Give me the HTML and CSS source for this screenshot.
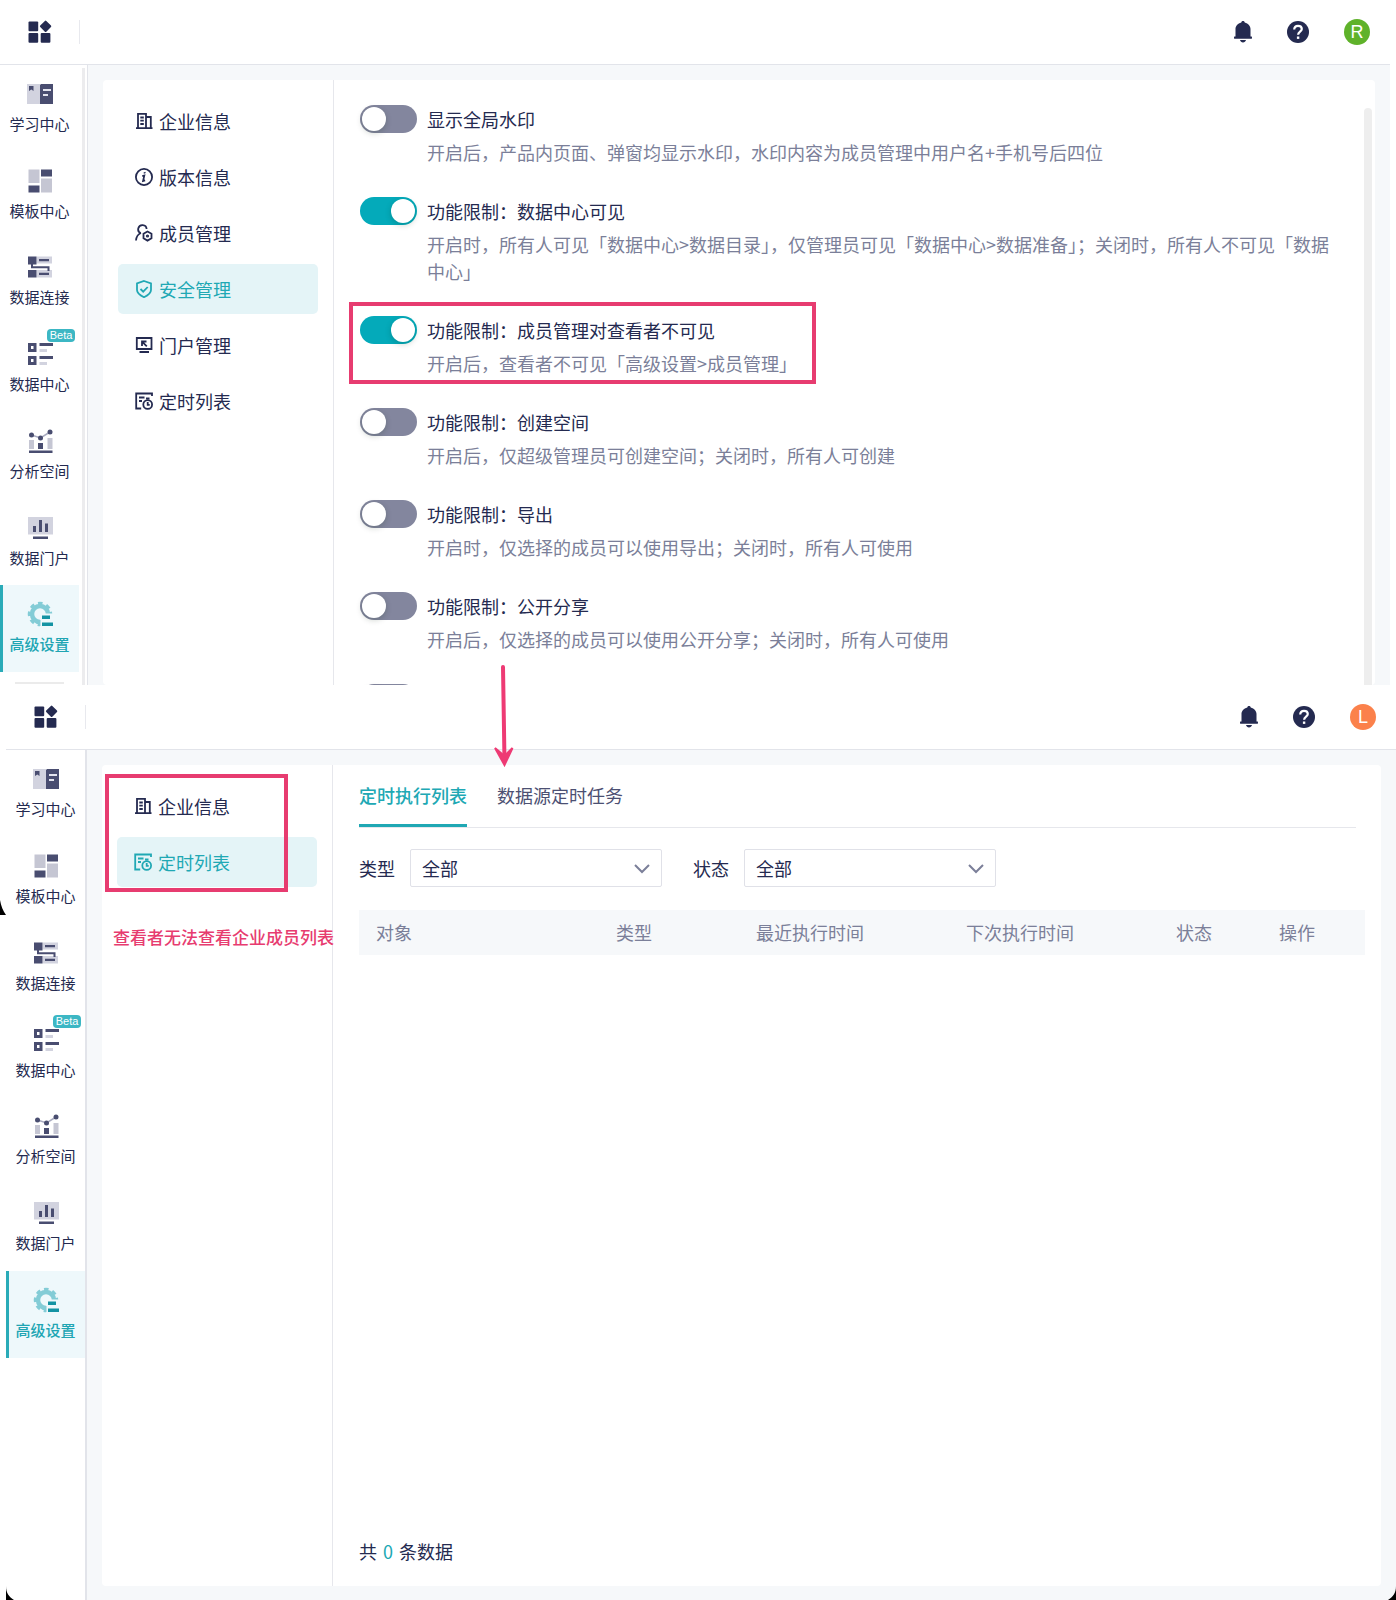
FILE: index.html
```html
<!DOCTYPE html>
<html lang="zh-CN">
<head>
    <meta charset="UTF-8">
    <meta name="viewport" content="width=device-width, initial-scale=1.0">
    <title>高级设置</title>
    <link rel="stylesheet" href="styles.css">
</head>
<body>

<svg class="symbols" aria-hidden="true">
    <symbol id="logo" viewBox="0 0 24 24">
        <rect x="0.500" y="1.500" width="9.700" height="9.700" rx="1"/>
        <rect x="0.500" y="13" width="9.700" height="9.700" rx="1"/>
        <rect x="12.700" y="13" width="9.700" height="9.700" rx="1"/>
        <rect x="13.300" y="2" width="8.600" height="8.600" rx="1" transform="rotate(45 17.600 6.300)"/>
    </symbol>
    <symbol id="bell" viewBox="0 0 18 22">
        <path d="M9 0c1 0 1.600.6 1.700 1.400C14.300 2.200 16.500 5 16.500 8v7.500h.9c.8 0 .8 2.300 0 2.300H.6c-.8 0-.8-2.300 0-2.300h.9V8c0-3 2.200-5.800 5.800-6.600C7.400.6 8 0 9 0zM6 19h6c-.4 1.600-1.500 2.500-3 2.500S6.400 20.600 6 19z"/>
    </symbol>
    <symbol id="help" viewBox="0 0 22 22">
        <circle cx="11" cy="11" r="11"/>
        <path d="M7.200 8.500C7.300 6.200 8.800 4.800 11 4.800s3.800 1.300 3.800 3.200c0 2.600-3.700 2.700-3.700 5.700" fill="none" stroke="#fff" stroke-width="2.200"/>
        <rect x="9.900" y="15.500" width="2.400" height="2.400" fill="#fff"/>
    </symbol>
    <symbol id="learn" viewBox="0 0 26 26">
        <path class="light" d="M0 3h13v20H0z"/>
        <path class="dark" d="M2 5h4.500v5L4.300 8.500 2 10zM13 4l1-1h12v20H13z"/>
        <path d="M16 8h8v2h-8zM16 13h5v2h-5z" fill="#e3e4ee"/>
    </symbol>
    <symbol id="template" viewBox="0 0 26 26">
        <path class="light mid" d="M1.500 1.500h11v13.500h-11zM14 10.500h11v14H14z"/>
        <path class="dark" d="M1.500 17.500h11v7h-11zM14 1.500h11v7H14z"/>
    </symbol>
    <symbol id="connect" viewBox="0 0 26 26">
        <path class="light" d="M9.500 2.500H25v7H9.500zM9.500 16H25v7.500H9.500z"/>
        <path class="dark" d="M1 2.500h8.500v8H1zM1 16h8.500v7.500H1zM12 5h10v2.300H12zM12 18.700h10V21H12z"/>
        <path d="M5 10v3.300h16.500V17" fill="none" stroke="#494d70" stroke-width="2"/>
    </symbol>
    <symbol id="data" viewBox="0 0 26 26">
        <path d="M2.500 3.500H8v6H2.500zM2.500 16.500H8v6H2.500z" fill="none" stroke="#494d70" stroke-width="3"/>
        <path class="dark" d="M12.500 2H26v3H12.500zM12.500 15H26v3H12.500z"/>
        <path class="light" d="M12.500 8H20v3h-7.500zM12.500 21H20v3h-7.500z"/>
    </symbol>
    <symbol id="analysis" viewBox="0 0 26 26">
        <path class="light mid" d="M2 12h5v9H2zM20.500 10h5v11h-5z"/>
        <path class="dark" d="M11 15h5v6h-5zM2 22.500h23.500V25H2z"/>
        <path d="M4.500 7l9 3 9.500-6" fill="none" stroke="#a9abc0" stroke-width="1.500"/>
        <circle class="dark" cx="4.500" cy="7" r="2.500"/>
        <circle class="dark" cx="13.500" cy="10" r="2.500"/>
        <circle class="dark" cx="23" cy="4" r="2.500"/>
    </symbol>
    <symbol id="portal" viewBox="0 0 26 26">
        <path class="light" d="M1 2h25v17.500H1z"/>
        <path class="dark" d="M6 11h3v6H6zM12 5h3v12h-3zM18 8.500h3V17h-3zM6 21.500h15V24H6z"/>
    </symbol>
    <symbol id="setting" viewBox="0 0 26 26">
        <circle cx="13" cy="13" r="8" fill="none" stroke="#83ccd6" stroke-width="4.500"/>
        <circle cx="13" cy="13" r="10.500" fill="none" stroke="#83ccd6" stroke-width="3.500" stroke-dasharray="4.300 3.947" transform="rotate(-12 13 13)"/>
        <path d="M13 12.500h13V26H13z" fill="#eef8fb"/>
        <path d="M11 19h2.500v6H11z" fill="#83ccd6"/>
        <path d="M15 14.500h8V18h-8zM15 21.500h11V25H15z" fill="#1493a3"/>
    </symbol>
    <symbol id="company" viewBox="0 0 18 18">
        <path d="M1 16.200h16.500M3 16V1.800h8V16M11 5h4.800v11M5.300 5.500h3.500M5.300 8.700h3.500M5.300 12h3.500"/>
    </symbol>
    <symbol id="version" viewBox="0 0 18 18">
        <circle cx="9" cy="9" r="8.100"/>
        <path d="M7.300 8.200l2-.6-1.200 5.300 2-.6"/>
        <path d="M9.300 4.200l.6 1.200" stroke-width="2"/>
    </symbol>
    <symbol id="member" viewBox="0 0 18 18">
        <path d="M5.800 9.200A4.200 4.200 0 1 1 11.600 5M1 16.500c.4-4 2-6.500 5-7.500"/>
        <path d="M12.500 7.500l4 2.200v4.600l-4 2.300-4-2.300V9.700z"/>
        <circle cx="12.500" cy="12" r="0.700"/>
    </symbol>
    <symbol id="safe" viewBox="0 0 18 18">
        <path d="M9 1l7 2.500V10c0 3.500-3.500 5.500-7 7.200C5.500 15.500 2 13.500 2 10V3.500zM5.500 9l2.700 2.700L12.700 7"/>
    </symbol>
    <symbol id="door" viewBox="0 0 18 18">
        <path d="M1.800 2h14.700v11H1.800zM4.500 16h9.500M7 10V5.500h4.500M7.300 5.800l4.500 4.500"/>
    </symbol>
    <symbol id="timing" viewBox="0 0 18 18">
        <path d="M17 4V1.500H1.200v15h5M4 5.500h5.500M4 9h3"/>
        <circle cx="12.700" cy="12.500" r="4.400"/>
        <path d="M11 6.500h3.500M12.700 10v2.800h2"/>
    </symbol>
</svg>

<div class="page">
    <!-- 管理员视角 -->
    <section class="window window-admin">
        <header class="header">
            <a class="logo" href="#" aria-label="首页"><svg><use href="#logo"/></svg></a>
            <div class="header-right">
                <button class="icon-btn bell" aria-label="通知"><svg><use href="#bell"/></svg></button>
                <button class="icon-btn" aria-label="帮助"><svg><use href="#help"/></svg></button>
                <button class="avatar">R</button>
            </div>
        </header>
        <div class="body">
            <div class="sidebar">
                <nav class="nav">
                    <a href="#"><svg><use href="#learn"/></svg>学习中心</a>
                    <a href="#"><svg><use href="#template"/></svg>模板中心</a>
                    <a href="#"><svg><use href="#connect"/></svg>数据连接</a>
                    <a href="#"><svg><use href="#data"/></svg>数据中心<span class="beta">Beta</span></a>
                    <a href="#"><svg><use href="#analysis"/></svg>分析空间</a>
                    <a href="#"><svg><use href="#portal"/></svg>数据门户</a>
                    <a class="active" href="#"><svg><use href="#setting"/></svg>高级设置</a>
                    <hr>
                </nav>
                <div class="nav-scroll"></div>
            </div>
            <main class="main">
                <div class="panel">
                    <nav class="menu">
                        <a href="#"><svg><use href="#company"/></svg>企业信息</a>
                        <a href="#"><svg><use href="#version"/></svg>版本信息</a>
                        <a href="#"><svg><use href="#member"/></svg>成员管理</a>
                        <a class="active" href="#"><svg><use href="#safe"/></svg>安全管理</a>
                        <a href="#"><svg><use href="#door"/></svg>门户管理</a>
                        <a href="#"><svg><use href="#timing"/></svg>定时列表</a>
                    </nav>
                    <div class="settings">
                        <div class="setting">
                            <input type="checkbox" class="switch" id="s1">
                            <div class="setting-text">
                                <label for="s1">显示全局水印</label>
                                <p>开启后，产品内页面、弹窗均显示水印，水印内容为成员管理中用户名+手机号后四位</p>
                            </div>
                        </div>
                        <div class="setting">
                            <input type="checkbox" class="switch" id="s2" checked>
                            <div class="setting-text">
                                <label for="s2">功能限制：数据中心可见</label>
                                <p>开启时，所有人可见「数据中心&gt;数据目录」，仅管理员可见「数据中心&gt;数据准备」；关闭时，所有人不可见「数据中心」</p>
                            </div>
                        </div>
                        <div class="setting">
                            <input type="checkbox" class="switch" id="s3" checked>
                            <div class="setting-text">
                                <label for="s3">功能限制：成员管理对查看者不可见</label>
                                <p>开启后，查看者不可见「高级设置&gt;成员管理」</p>
                            </div>
                            <div class="mark mark-setting"></div>
                        </div>
                        <div class="setting">
                            <input type="checkbox" class="switch" id="s4">
                            <div class="setting-text">
                                <label for="s4">功能限制：创建空间</label>
                                <p>开启后，仅超级管理员可创建空间；关闭时，所有人可创建</p>
                            </div>
                        </div>
                        <div class="setting">
                            <input type="checkbox" class="switch" id="s5">
                            <div class="setting-text">
                                <label for="s5">功能限制：导出</label>
                                <p>开启时，仅选择的成员可以使用导出；关闭时，所有人可使用</p>
                            </div>
                        </div>
                        <div class="setting">
                            <input type="checkbox" class="switch" id="s6">
                            <div class="setting-text">
                                <label for="s6">功能限制：公开分享</label>
                                <p>开启后，仅选择的成员可以使用公开分享；关闭时，所有人可使用</p>
                            </div>
                        </div>
                        <div class="setting">
                            <input type="checkbox" class="switch" id="s7" aria-label="功能限制">
                        </div>
                    </div>
                    <div class="panel-scroll"></div>
                </div>
            </main>
        </div>
    </section>

    <!-- 查看者视角 -->
    <section class="window window-viewer">
        <header class="header">
            <a class="logo" href="#" aria-label="首页"><svg><use href="#logo"/></svg></a>
            <div class="header-right">
                <button class="icon-btn bell" aria-label="通知"><svg><use href="#bell"/></svg></button>
                <button class="icon-btn" aria-label="帮助"><svg><use href="#help"/></svg></button>
                <button class="avatar orange">L</button>
            </div>
        </header>
        <div class="body">
            <div class="sidebar">
                <nav class="nav">
                    <a href="#"><svg><use href="#learn"/></svg>学习中心</a>
                    <a href="#"><svg><use href="#template"/></svg>模板中心</a>
                    <a href="#"><svg><use href="#connect"/></svg>数据连接</a>
                    <a href="#"><svg><use href="#data"/></svg>数据中心<span class="beta">Beta</span></a>
                    <a href="#"><svg><use href="#analysis"/></svg>分析空间</a>
                    <a href="#"><svg><use href="#portal"/></svg>数据门户</a>
                    <a class="active" href="#"><svg><use href="#setting"/></svg>高级设置</a>
                </nav>
            </div>
            <main class="main">
                <div class="panel">
                    <nav class="menu">
                        <a href="#"><svg><use href="#company"/></svg>企业信息</a>
                        <a class="active" href="#"><svg><use href="#timing"/></svg>定时列表</a>
                        <div class="mark mark-menu"></div>
                        <div class="mark-text">查看者无法查看企业成员列表</div>
                    </nav>
                    <div class="tasks">
                        <div class="tabs">
                            <button class="tab active">定时执行列表</button>
                            <button class="tab">数据源定时任务</button>
                        </div>
                        <div class="filters">
                            <label for="type">类型</label>
                            <div class="select">
                                <select id="type"><option>全部</option></select>
                                <svg viewBox="0 0 16 10"><path d="M1 1l7 7 7-7"/></svg>
                            </div>
                            <label for="status">状态</label>
                            <div class="select">
                                <select id="status"><option>全部</option></select>
                                <svg viewBox="0 0 16 10"><path d="M1 1l7 7 7-7"/></svg>
                            </div>
                        </div>
                        <table class="table">
                            <thead>
                                <tr>
                                    <th>对象</th>
                                    <th class="col-type">类型</th>
                                    <th class="col-time">最近执行时间</th>
                                    <th class="col-time">下次执行时间</th>
                                    <th class="col-small">状态</th>
                                    <th class="col-small">操作</th>
                                </tr>
                            </thead>
                        </table>
                        <div class="total">共 <span>0</span> 条数据</div>
                    </div>
                </div>
            </main>
        </div>
    </section>

    <svg class="arrow" viewBox="0 0 20 102"><path d="M9 2l1.500 94" stroke-width="4" stroke-linecap="round"/><path d="M1 83l9.500 17L18.500 83l-8 8z" fill="#ee3a74" stroke-width="2"/></svg>
    <svg class="corner corner-top" viewBox="0 0 6 15"><path d="M0 0c1 6 3 11 6 15H0z"/></svg>
    <svg class="corner corner-left" viewBox="0 0 8 14"><path d="M0 0c0 7 3 11 8 14H0z"/></svg>
    <svg class="corner corner-right" viewBox="0 0 8 14"><path d="M8 0c0 7-3 11-8 14h8z"/></svg>
</div>

</body>
</html>
```
FILE: styles.css
```css
* {
    box-sizing: border-box;
}
body {
    margin: 0;
    font-family: "Noto Sans CJK SC", sans-serif;
    font-size: 18px;
    color: #242a50;
    background-color: #fff;
}
a {
    color: inherit;
    text-decoration: none;
}
button, select {
    font: inherit;
    color: inherit;
    border: none;
    padding: 0;
    background: none;
    cursor: pointer;
}
.symbols {
    display: none;
}
.page {
    position: relative;
    min-height: 100vh;
    display: flex;
    flex-direction: column;
    overflow: hidden;
}
.window {
    display: flex;
    flex-direction: column;
}
/* the admin window is cut off under the fold */
.window-admin {
    height: 685px;
    margin-right: 6px;
    overflow: hidden;
}
.window-viewer {
    flex: 1;
    margin-left: 6px;
}

/* header */
.header {
    flex: none;
    display: flex;
    align-items: center;
    justify-content: space-between;
    height: 65px;
    padding-right: 20px;
    border-bottom: 1px solid #e2e4ea;
}
.logo {
    display: flex;
    justify-content: center;
    width: 80px;
    border-right: 1px solid #e8e9ee;
}
.logo svg {
    width: 24px;
    height: 24px;
    fill: #242a50;
}
.header-right {
    display: flex;
    align-items: center;
    gap: 35px;
}
.icon-btn {
    display: flex;
}
.icon-btn svg {
    width: 22px;
    height: 22px;
    fill: #242a50;
}
.bell svg {
    width: 18px;
}
.avatar {
    width: 26px;
    height: 26px;
    border-radius: 50%;
    background-color: #5fb22a;
    color: #fff;
    font: 18px/26px "Liberation Sans", Arial, sans-serif;
}
.avatar.orange {
    background-color: #fb814b;
}

/* left navigation */
.body {
    flex: 1;
    display: flex;
}
.sidebar {
    flex: none;
    display: flex;
    gap: 3px;
    border-right: 1px solid #e2e4ea;
}
.window-admin .sidebar {
    padding-right: 2px;
}
.window-viewer .sidebar {
    border-right-width: 2px;
}
.nav {
    width: 79px;
    height: 607px;
    display: flex;
    flex-direction: column;
}
.nav a {
    position: relative;
    flex: 1 0 0;
    display: flex;
    flex-direction: column;
    align-items: center;
    gap: 6px;
    padding-top: 16px;
    font-size: 15px;
    line-height: 22px;
}
.window-admin .nav {
    height: 619px;
}
.window-viewer .nav {
    height: 608px;
}
.nav svg {
    width: 26px;
    height: 26px;
}
.nav .active {
    background-color: #eef8fb;
    box-shadow: inset 3px 0 #2aabb8;
    color: #20a5b3;
    font-weight: 500;
}
.nav hr {
    flex: none;
    width: 49px;
    height: 2px;
    margin: 10px auto 0;
    border: none;
    background-color: #ebebeb;
}
.dark {
    fill: #494d70;
}
.light {
    fill: #d2d3df;
}
.mid {
    fill: #c5c6d3;
}
.beta {
    position: absolute;
    top: 4px;
    right: 4px;
    width: 28px;
    border-radius: 4px;
    background-color: #3cb7c4;
    color: #fff;
    font: 11px/13px "Liberation Sans", Arial, sans-serif;
    text-align: center;
}
.nav-scroll {
    width: 3px;
    margin-top: 3px;
    background-color: #ececee;
}

/* content */
.main {
    flex: 1;
    min-width: 0;
    display: flex;
    padding: 15px 15px 14px;
    background-color: #f6f8fa;
}
.window-admin .main {
    padding-bottom: 0;
}
.panel {
    flex: 1;
    min-width: 0;
    display: flex;
    border-radius: 4px;
    background-color: #fff;
}
.menu {
    position: relative;
    flex: none;
    display: flex;
    flex-direction: column;
    gap: 6px;
    padding: 16px 15px;
    border-right: 1px solid #e6e7ec;
}
.menu a {
    display: flex;
    align-items: center;
    gap: 6px;
    width: 200px;
    height: 50px;
    padding-left: 17px;
    border-radius: 5px;
}
.menu a svg {
    width: 18px;
    height: 18px;
    fill: none;
    stroke: currentColor;
    stroke-width: 1.8;
}
.menu .active {
    background-color: #e4f4f7;
    color: #20a8b4;
}

/* switches */
.settings {
    flex: 1;
    display: flex;
    flex-direction: column;
    gap: 31px;
    height: 605px;
    padding: 25px 24px 0 26px;
    overflow: hidden;
}
.setting {
    position: relative;
    flex: none;
    display: flex;
    gap: 10px;
}
.switch {
    appearance: none;
    flex: none;
    width: 57px;
    height: 28px;
    margin: 0;
    padding: 2px;
    border-radius: 14px;
    background-color: #83869e;
    cursor: pointer;
}
.switch::before {
    content: "";
    display: block;
    width: 24px;
    height: 24px;
    border-radius: 50%;
    background-color: #fff;
    box-shadow: 0 2px 6px rgba(0, 35, 11, 0.2);
}
.switch:checked {
    background-color: #04aaba;
}
.switch:checked::before {
    margin-left: auto;
}
.setting label {
    display: block;
    line-height: 28px;
}
.setting p {
    margin: 6px 0 0;
    line-height: 27px;
    color: #7b7f99;
}
.panel-scroll {
    flex: none;
    width: 8px;
    margin: 28px 3px 0 0;
    border-radius: 4px 4px 0 0;
    background-color: #eee;
}

/* scheduled tasks */
.tasks {
    flex: 1;
    min-width: 0;
    display: flex;
    flex-direction: column;
    padding: 0 16px 21px 26px;
}
.tabs {
    display: flex;
    gap: 30px;
    height: 63px;
    margin-right: 9px;
    border-bottom: 1px solid #e6e7ec;
}
.tab {
    border-bottom: 3px solid transparent;
    color: #4c5072;
}
.tab.active {
    border-color: #20a8b4;
    color: #20a8b4;
    font-weight: 500;
}
.filters {
    display: flex;
    align-items: center;
    gap: 15px;
    margin: 21px 0 23px;
}
.select {
    position: relative;
    width: 252px;
    margin-right: 16px;
}
.select select {
    appearance: none;
    display: block;
    width: 100%;
    height: 38px;
    padding: 0 11px;
    border: 1px solid #e0e1e8;
    border-radius: 2px;
}
.select svg {
    position: absolute;
    top: 15px;
    right: 12px;
    width: 16px;
    height: 10px;
    fill: none;
    stroke: #7b7f99;
    stroke-width: 2;
    pointer-events: none;
}
.table {
    width: 100%;
    table-layout: fixed;
    border-collapse: collapse;
}
.table th {
    height: 45px;
    padding: 0 17px 2px;
    background-color: #f6f8fa;
    color: #7b7f99;
    font-weight: 400;
    text-align: left;
    white-space: nowrap;
}
.col-type {
    width: 140px;
}
.col-time {
    width: 210px;
}
.col-small {
    width: 103px;
}
.total {
    margin-top: auto;
    line-height: 28px;
}
.total span {
    margin: 0 2px;
    color: #20a8b4;
}

/* annotations */
.mark {
    position: absolute;
    border: 4px solid #e73c70;
    pointer-events: none;
}
.mark-setting {
    top: -14px;
    left: -11px;
    width: 467px;
    height: 82px;
}
.mark-menu {
    top: 9px;
    left: 3px;
    width: 183px;
    height: 118px;
}
.mark-text {
    position: absolute;
    top: 159px;
    left: 11px;
    color: #e73c70;
    font-size: 17px;
    font-weight: 500;
    line-height: 26px;
    white-space: nowrap;
}
.arrow {
    position: absolute;
    top: 665px;
    left: 494px;
    width: 20px;
    height: 102px;
    fill: none;
    stroke: #ee3a74;
}
.corner {
    position: absolute;
    fill: #000;
}
.corner-top {
    top: 900px;
    left: 0;
    width: 6px;
    height: 15px;
}
.corner-left {
    bottom: 0;
    left: 6px;
    width: 8px;
    height: 14px;
}
.corner-right {
    right: 0;
    bottom: 0;
    width: 8px;
    height: 14px;
}
```
